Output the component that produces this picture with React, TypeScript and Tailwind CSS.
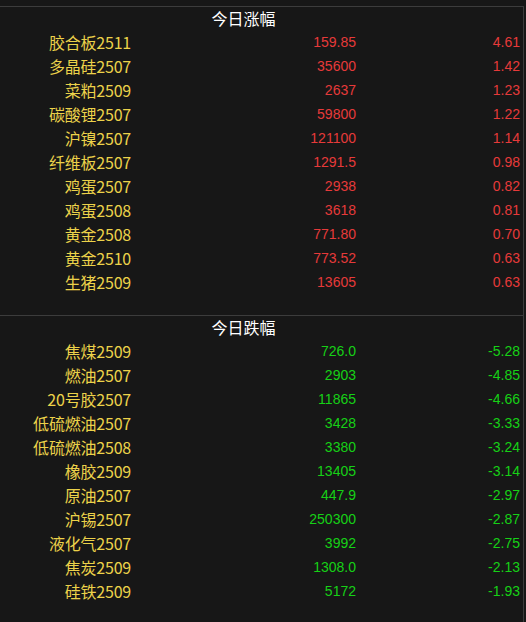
import React from "react";

type Row = { name: string; price: string; change: string };

const gainers: Row[] = [
  { name: "胶合板2511", price: "159.85", change: "4.61" },
  { name: "多晶硅2507", price: "35600", change: "1.42" },
  { name: "菜粕2509", price: "2637", change: "1.23" },
  { name: "碳酸锂2507", price: "59800", change: "1.22" },
  { name: "沪镍2507", price: "121100", change: "1.14" },
  { name: "纤维板2507", price: "1291.5", change: "0.98" },
  { name: "鸡蛋2507", price: "2938", change: "0.82" },
  { name: "鸡蛋2508", price: "3618", change: "0.81" },
  { name: "黄金2508", price: "771.80", change: "0.70" },
  { name: "黄金2510", price: "773.52", change: "0.63" },
  { name: "生猪2509", price: "13605", change: "0.63" },
];

const losers: Row[] = [
  { name: "焦煤2509", price: "726.0", change: "-5.28" },
  { name: "燃油2507", price: "2903", change: "-4.85" },
  { name: "20号胶2507", price: "11865", change: "-4.66" },
  { name: "低硫燃油2507", price: "3428", change: "-3.33" },
  { name: "低硫燃油2508", price: "3380", change: "-3.24" },
  { name: "橡胶2509", price: "13405", change: "-3.14" },
  { name: "原油2507", price: "447.9", change: "-2.97" },
  { name: "沪锡2507", price: "250300", change: "-2.87" },
  { name: "液化气2507", price: "3992", change: "-2.75" },
  { name: "焦炭2509", price: "1308.0", change: "-2.13" },
  { name: "硅铁2509", price: "5172", change: "-1.93" },
];

const Section: React.FC<{ title: string; rows: Row[]; up: boolean }> = ({ title, rows, up }) => {
  const valueColor = up ? "text-[#e63a3a]" : "text-[#16d016]";
  return (
    <div>
      <div className="flex h-[24px] items-center pb-[3px]">
        <div className="w-[131px]" />
        <div className="w-[225px] text-center text-[16px] leading-none text-white [font-family:'Noto_Sans_CJK_SC',sans-serif]">
          {title}
        </div>
      </div>
      {rows.map((r) => (
        <div key={r.name} className="flex h-[24px] items-center pb-[2px]">
          <div className="w-[131px] text-right text-[16px] leading-none tracking-[-0.2px] text-[#ecd24a] [font-family:'Noto_Sans_CJK_SC',sans-serif]">
            {r.name}
          </div>
          <div className={`w-[225px] text-right text-[14px] leading-none [font-family:'Liberation_Sans',sans-serif] ${valueColor}`}>
            {r.price}
          </div>
          <div className={`w-[164px] text-right text-[14px] leading-none [font-family:'Liberation_Sans',sans-serif] ${valueColor}`}>
            {r.change}
          </div>
        </div>
      ))}
    </div>
  );
};

export default function App() {
  return (
    <div className="h-[622px] w-[526px] overflow-hidden bg-[#171717] pt-[6px]">
      <div className="h-[616px] w-[524px] border-t border-r border-[#3c3c3c]">
        <Section title="今日涨幅" rows={gainers} up />
        <div className="h-[20px]" />
        <div className="border-t border-[#3c3c3c]">
          <Section title="今日跌幅" rows={losers} up={false} />
        </div>
      </div>
    </div>
  );
}
